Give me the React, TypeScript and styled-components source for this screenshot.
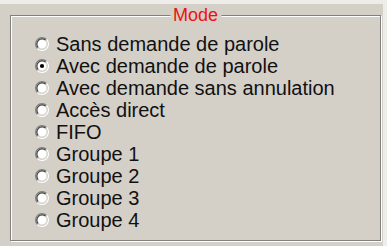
import React from 'react';
import styled, { createGlobalStyle } from 'styled-components';

const GlobalStyle = createGlobalStyle`
  html, body {
    margin: 0;
    padding: 0;
    background: #d4d0c8;
  }
`;

const Page = styled.div`
  width: 387px;
  height: 246px;
  box-sizing: border-box;
  background: #d4d0c8;
  border-top: 4px solid #eeede9;
  border-right: 4px solid #eeede9;
  padding: 11px 2px 0 10px;
  font-family: "Liberation Sans", Arial, sans-serif;
`;

const Frame = styled.div`
  position: relative;
  height: 226px;
  box-sizing: border-box;
  border: 1px solid #808080;
  box-shadow: 1px 1px 0 #fff, inset 1px 1px 0 #fff;
  padding: 17px 0 0 24px;
`;

const Legend = styled.span`
  position: absolute;
  top: -11px;
  left: 50%;
  transform: translateX(-50%);
  padding: 0 3px;
  background: #d4d0c8;
  color: #f01010;
  font-size: 18px;
  line-height: 21px;
`;

const List = styled.ul`
  list-style: none;
  margin: 0;
  padding: 0;
`;

const Row = styled.li`
  display: flex;
  align-items: center;
  gap: 7px;
  height: 22px;
  font-size: 20px;
  color: #111;
  white-space: nowrap;
`;

const RadioIcon = ({ checked }: { checked: boolean }) => (
  <svg width="14" height="14" viewBox="0 0 12 12">
    <circle cx="6" cy="6" r="4.5" fill="#fff" />
    <path d="M2.11 9.89 A5.5 5.5 0 0 1 9.89 2.11" fill="none" stroke="#808080" strokeWidth="1" />
    <path d="M9.89 2.11 A5.5 5.5 0 0 1 2.11 9.89" fill="none" stroke="#fff" strokeWidth="1" />
    <path d="M2.82 9.18 A4.5 4.5 0 0 1 9.18 2.82" fill="none" stroke="#404040" strokeWidth="1" />
    <path d="M9.18 2.82 A4.5 4.5 0 0 1 2.82 9.18" fill="none" stroke="#d4d0c8" strokeWidth="1" />
    {checked && <circle cx="6" cy="6" r="1.8" fill="#000" />}
  </svg>
);

const options = [
  'Sans demande de parole',
  'Avec demande de parole',
  'Avec demande sans annulation',
  'Accès direct',
  'FIFO',
  'Groupe 1',
  'Groupe 2',
  'Groupe 3',
  'Groupe 4',
];

export default function App() {
  const selected = 1;
  return (
    <>
      <GlobalStyle />
      <Page>
        <Frame>
          <Legend>Mode</Legend>
          <List>
            {options.map((label, i) => (
              <Row key={label}>
                <RadioIcon checked={i === selected} />
                <span>{label}</span>
              </Row>
            ))}
          </List>
        </Frame>
      </Page>
    </>
  );
}
